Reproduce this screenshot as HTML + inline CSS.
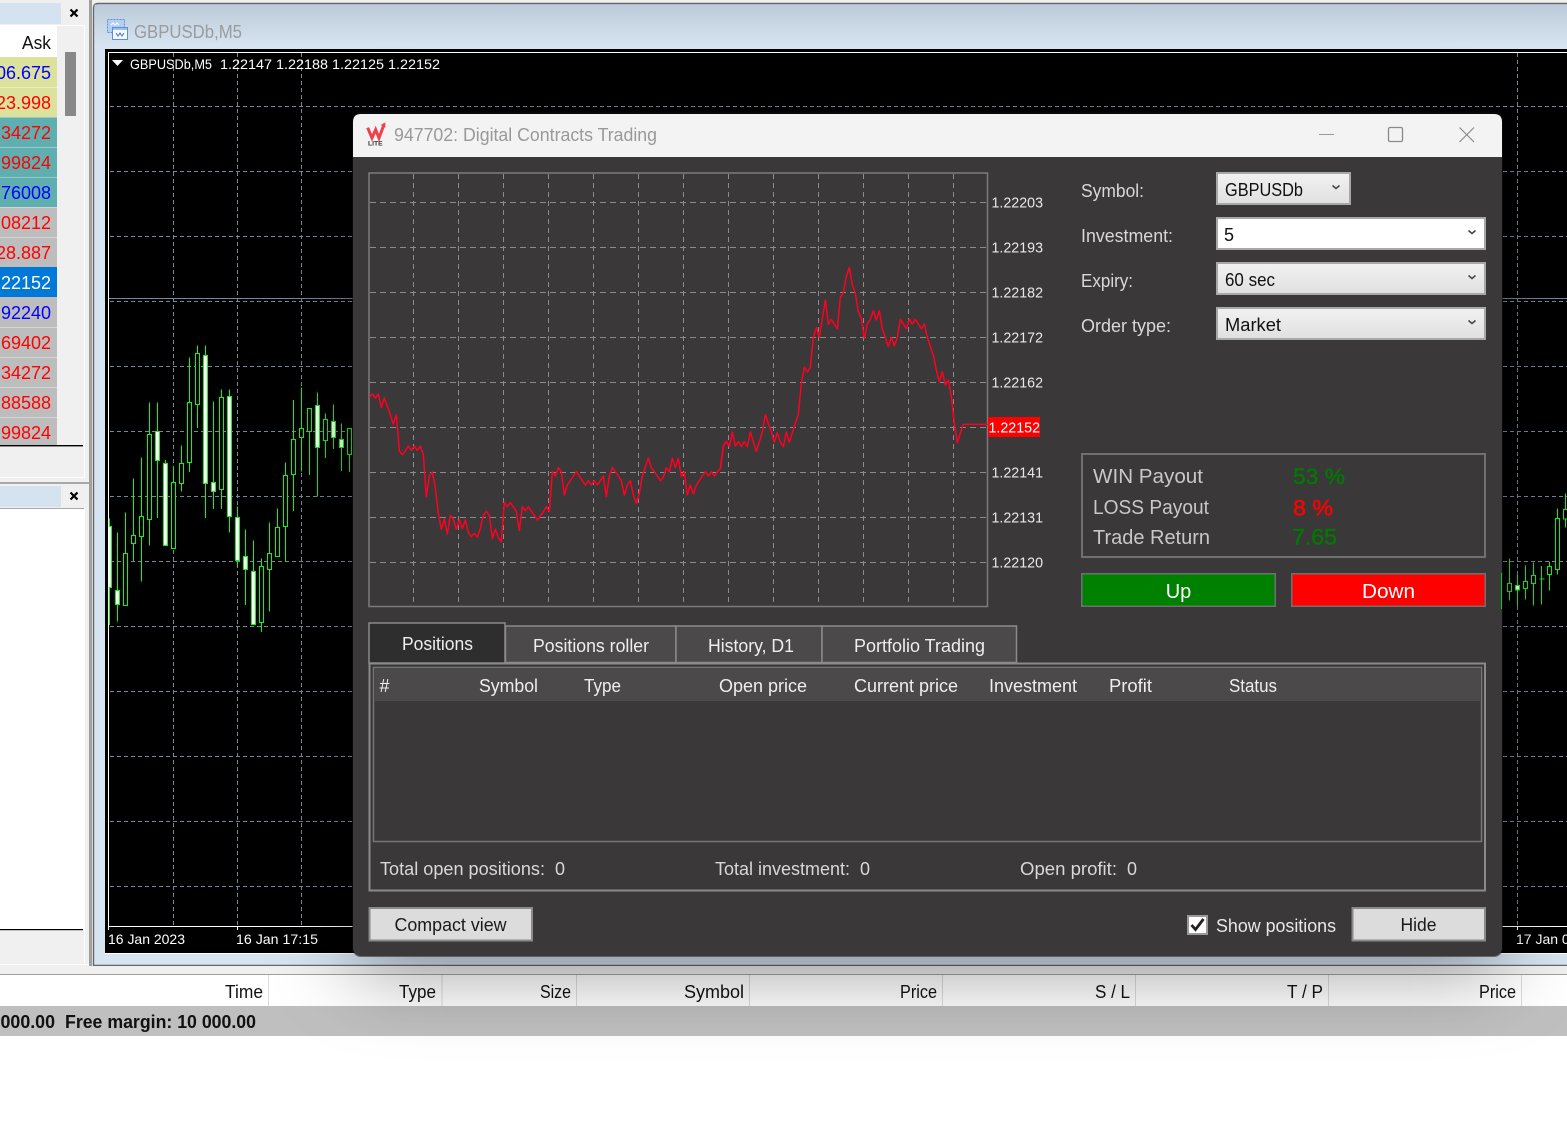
<!DOCTYPE html>
<html><head><meta charset="utf-8"><title>Digital Contracts Trading</title>
<style>
html,body{margin:0;padding:0;background:#fff;width:1567px;height:1147px;overflow:hidden}
svg{display:block;font-family:"Liberation Sans",sans-serif}
</style></head><body>
<svg xmlns="http://www.w3.org/2000/svg" width="1567" height="1147" viewBox="0 0 1567 1147">
<defs>
<linearGradient id="tb" x1="0" y1="0" x2="0" y2="1"><stop offset="0" stop-color="#bccbd9"/><stop offset="1" stop-color="#d8e5f2"/></linearGradient>
<linearGradient id="cb" x1="0" y1="0" x2="0" y2="1"><stop offset="0" stop-color="#f2f2f2"/><stop offset="1" stop-color="#e0e0e0"/></linearGradient>
<filter id="sh" x="-20%" y="-25%" width="140%" height="150%"><feGaussianBlur stdDeviation="40"/></filter>
<clipPath id="chartclip"><rect x="109" y="53" width="1458" height="873"/></clipPath>
</defs>

<!-- left panels -->
<rect x="0" y="0" width="90" height="966" fill="#f0f0f0"/>
<rect x="0" y="3" width="61" height="21" fill="#d5e2ef"/>
<path d="M70.5 9.5l7 7M77.5 9.5l-7 7" stroke="#000" stroke-width="2.2"/>
<rect x="0" y="25" width="84" height="1" fill="#fff"/>
<rect x="0" y="26" width="57" height="31" fill="#fff"/>
<text x="51" y="49" font-size="18" text-anchor="end" fill="#111" textLength="29" lengthAdjust="spacingAndGlyphs">Ask</text>
<rect y="57" width="57" height="60" fill="#dce29c"/>
<rect y="117" width="57" height="90" fill="#5fafb0"/>
<rect y="207" width="57" height="60" fill="#bdbdbd"/>
<rect y="267" width="57" height="30" fill="#0078d7"/>
<rect y="297" width="57" height="148" fill="#bdbdbd"/>
<path d="M0 87.5H57M0 117.5H57M0 147.5H57M0 177.5H57M0 207.5H57M0 237.5H57M0 327.5H57M0 357.5H57M0 387.5H57M0 417.5H57" stroke="#fff" stroke-opacity=".35"/>
<g font-size="18" text-anchor="end" fill="#f00">
<text x="51" y="79" fill="#00f">06.675</text>
<text x="51" y="109">23.998</text>
<text x="51" y="139">34272</text>
<text x="51" y="169">99824</text>
<text x="51" y="199" fill="#00f">76008</text>
<text x="51" y="229">08212</text>
<text x="51" y="259">28.887</text>
<text x="51" y="289" fill="#fff">22152</text>
<text x="51" y="319" fill="#00f">92240</text>
<text x="51" y="349">69402</text>
<text x="51" y="379">34272</text>
<text x="51" y="409">88588</text>
<text x="51" y="439">99824</text>
</g>
<rect x="65" y="52" width="11" height="64" fill="#888"/>
<rect x="0" y="445" width="83" height="1.4" fill="#000"/>
<rect x="0" y="477" width="85" height="1" fill="#fff"/>
<rect x="84" y="25" width="1" height="453" fill="#fff"/>
<rect x="0" y="482" width="90" height="2" fill="#a8a8a8"/>
<rect x="0" y="486" width="61" height="21" fill="#d5e2ef"/>
<path d="M70.5 492.5l7 7M77.5 492.5l-7 7" stroke="#000" stroke-width="2.2"/>
<rect x="0" y="508" width="84" height="1" fill="#a8a8a8"/>
<rect x="0" y="509" width="84" height="420" fill="#fff"/>
<rect x="0" y="929" width="83" height="1.2" fill="#000"/>
<rect x="0" y="964" width="90" height="1" fill="#fff"/>
<rect x="84" y="509" width="1" height="454" fill="#fff"/>
<rect x="89" y="0" width="3" height="966" fill="#a0a0a0"/>

<!-- chart window -->
<rect x="92" y="0" width="1475" height="975" fill="#f0f0f0"/>
<path d="M1567 3.5H98q-4.500 0 -4.500 4.500V965.500H1567" fill="#d6e4f2" stroke="#666" stroke-width="1.4"/>
<rect x="94.500" y="4.500" width="1473" height="44" fill="url(#tb)"/>
<!-- window icon -->
<rect x="107.500" y="19.500" width="17" height="13" fill="#b4cff2" stroke="#5c90dc" stroke-dasharray="2 1"/>
<path d="M111 25l2-2 2 2 2-2 2 2" stroke="#ffffff" fill="none"/>
<rect x="112.500" y="27.500" width="15" height="12" fill="#f6faff" stroke="#5c90dc"/>
<rect x="113" y="28" width="14" height="2" fill="#9cc0ee"/>
<path d="M116 33l2 3 2-3 2 3 2-3" stroke="#3a70c0" fill="none"/>
<text x="134" y="38" font-size="18" fill="#9b9b9b" textLength="108" lengthAdjust="spacingAndGlyphs">GBPUSDb,M5</text>

<rect x="105" y="49" width="1462" height="904" fill="#000"/>
<rect x="105" y="953" width="1462" height="1" fill="#fff"/>
<path d="M108.500 52.500H1567M108.500 52V926.500H1567" stroke="#fff" fill="none"/>
<path d="M237.500 926v4M108.500 926v4M1517.500 926v4" stroke="#fff"/>
<g stroke="#778899" stroke-dasharray="4 3" fill="none" clip-path="url(#chartclip)">
<path d="M110 106.500H1567M110 171.500H1567M110 236.500H1567M110 301.500H1567M110 366.500H1567M110 431.500H1567M110 496.500H1567M110 561.500H1567M110 626.500H1567M110 691.500H1567M110 756.500H1567M110 821.500H1567M110 886.500H1567"/>
<path d="M173.500 53V926M237.500 53V926M301.500 53V926M1517.500 53V926"/>
</g>
<rect x="109" y="298" width="1458" height="1" fill="#778899"/>
<path d="M112 60h11l-5.500 6z" fill="#fff"/>
<g font-size="14" fill="#fff">
<text x="130" y="69" textLength="82" lengthAdjust="spacingAndGlyphs">GBPUSDb,M5</text>
<text x="220" y="69" textLength="220" lengthAdjust="spacingAndGlyphs">1.22147 1.22188 1.22125 1.22152</text>
<text x="108" y="944" textLength="77" lengthAdjust="spacingAndGlyphs">16 Jan 2023</text>
<text x="236" y="944" textLength="82" lengthAdjust="spacingAndGlyphs">16 Jan 17:15</text>
<text x="1516" y="944">17 Jan 02:15</text>
</g>

<!-- candles (left group) -->
<g transform="translate(0,320) scale(.33333)" shape-rendering="crispEdges">
<path stroke="#00ff00" stroke-width="3" fill="none" d="M328.500 595V915M352.500 637V905M376.500 577V857M400.500 475V723M424.500 412V785M448.500 247V677M472.500 247V594M496.500 420V677M520.500 440V686M544.500 376V515M568.500 112V456M592.500 76V324M616.500 76V594M640.500 244V567M664.500 208V567M688.500 208V638M712.500 559V741M736.500 628V855M760.500 661V914M784.500 715V936M808.500 607V875M832.500 565V710M856.500 427V724M880.500 240V573M904.500 203V454M928.500 265V465M952.500 217V530M976.500 280V414M1000.500 253V387M1024.500 310V453M1048.500 325V456"/>
<g fill="#000" stroke="#00ff00" stroke-width="3">
<rect x="370.500" y="700" width="12" height="156"/>
<rect x="394.500" y="647" width="12" height="23"/>
<rect x="418.500" y="590" width="12" height="59"/>
<rect x="442.500" y="343" width="12" height="255"/>
<rect x="514.500" y="487" width="12" height="199"/>
<rect x="538.500" y="431" width="12" height="59"/>
<rect x="562.500" y="247" width="12" height="180"/>
<rect x="586.500" y="100" width="12" height="153"/>
<rect x="658.500" y="232" width="12" height="276"/>
<rect x="778.500" y="739" width="12" height="168"/>
<rect x="802.500" y="700" width="12" height="48"/>
<rect x="826.500" y="622" width="12" height="87"/>
<rect x="850.500" y="466" width="12" height="153"/>
<rect x="874.500" y="358" width="12" height="105"/>
<rect x="898.500" y="326" width="12" height="26"/>
<rect x="922.500" y="265" width="12" height="69"/>
<rect x="970.500" y="298" width="12" height="63"/>
<rect x="1042.500" y="325" width="12" height="78"/>
</g>
<g fill="#fff" stroke="#00ff00" stroke-width="3">
<rect x="322.500" y="620" width="12" height="182"/>
<rect x="346.500" y="812" width="12" height="41"/>
<rect x="466.500" y="335" width="12" height="86"/>
<rect x="490.500" y="431" width="12" height="245"/>
<rect x="610.500" y="106" width="12" height="384"/>
<rect x="634.500" y="488" width="12" height="26"/>
<rect x="682.500" y="230" width="12" height="359"/>
<rect x="706.500" y="593" width="12" height="128"/>
<rect x="730.500" y="710" width="12" height="38"/>
<rect x="754.500" y="755" width="12" height="158"/>
<rect x="946.500" y="257" width="12" height="125"/>
<rect x="994.500" y="305" width="12" height="47"/>
<rect x="1018.500" y="359" width="12" height="23"/>
</g>
</g>
<rect x="105" y="320" width="3" height="320" fill="#000"/>
<rect x="108" y="320" width="1" height="320" fill="#fff"/>
<!-- candles (right group) -->
<g transform="translate(1060,440) scale(.33333)" shape-rendering="crispEdges">
<path stroke="#00ff00" stroke-width="3" fill="none" d="M1348.500 355V482M1372.500 405V498M1396.500 377V478M1420.500 367V496M1444.500 378V494M1468.500 365V452M1492.500 205V404M1516.500 160V263"/>
<g fill="#000" stroke="#00ff00" stroke-width="3">
<rect x="1342.500" y="431" width="12" height="23"/>
<rect x="1390.500" y="425" width="12" height="20"/>
<rect x="1414.500" y="407" width="12" height="23"/>
<rect x="1462.500" y="380" width="12" height="23"/>
<rect x="1486.500" y="236" width="12" height="152"/>
<rect x="1510.500" y="208" width="12" height="29"/>
</g>
<rect x="1366.500" y="437" width="12" height="13" fill="#fff" stroke="#00ff00" stroke-width="3"/>
<rect x="1438" y="415" width="15" height="3" fill="#00ff00"/>
</g>

<!-- bottom table -->
<rect x="0" y="966" width="1567" height="8" fill="#f0f0f0"/>
<rect x="0" y="974" width="1567" height="1" fill="#a0a0a0"/>
<rect x="0" y="975" width="1567" height="31" fill="#fff"/>
<path d="M268.500 975V1006M442 975V1006M576.500 975V1006M749.500 975V1006M942.500 975V1006M1135.500 975V1006M1328.500 975V1006M1521.500 975V1006" stroke="#dcdcdc"/>
<g font-size="18" text-anchor="end" fill="#111">
<text x="263" y="998" textLength="38" lengthAdjust="spacingAndGlyphs">Time</text>
<text x="436" y="998" textLength="37" lengthAdjust="spacingAndGlyphs">Type</text>
<text x="571" y="998" textLength="31" lengthAdjust="spacingAndGlyphs">Size</text>
<text x="744" y="998" textLength="60" lengthAdjust="spacingAndGlyphs">Symbol</text>
<text x="937" y="998" textLength="37" lengthAdjust="spacingAndGlyphs">Price</text>
<text x="1130" y="998" textLength="35" lengthAdjust="spacingAndGlyphs">S / L</text>
<text x="1323" y="998" textLength="36" lengthAdjust="spacingAndGlyphs">T / P</text>
<text x="1516" y="998" textLength="37" lengthAdjust="spacingAndGlyphs">Price</text>
</g>
<rect x="0" y="1006" width="1567" height="30" fill="#bfbfbf"/>
<text x="0.500" y="1028" font-size="18" font-weight="bold" fill="#111" textLength="54.500" lengthAdjust="spacingAndGlyphs">000.00</text>
<text x="65" y="1028" font-size="18" font-weight="bold" fill="#111" textLength="191" lengthAdjust="spacingAndGlyphs">Free margin: 10 000.00</text>

<!-- dialog shadow -->
<rect x="353" y="134" width="1149" height="836" rx="8" fill="#000" fill-opacity=".4" filter="url(#sh)"/>

<!-- dialog -->
<rect x="352" y="112" width="1151" height="845" rx="9" fill="#111" fill-opacity=".5"/>
<rect x="353" y="114" width="1149" height="842" rx="8" fill="#3a3839"/>
<path d="M353 157V122q0-8 8-8H1494q8 0 8 8V157z" fill="#f3f3f3"/>
<g transform="translate(350,105) scale(.33333)">
<path d="M53 68L66 99L77 74L87 99L100 64" fill="none" stroke="#f0404a" stroke-width="9"/>
<path d="M92 60L106 52L106 68z" fill="#f0404a"/>
<text x="54" y="122" font-size="20" font-weight="bold" fill="#333" textLength="44" lengthAdjust="spacingAndGlyphs">LITE</text>
</g>
<text x="394" y="141" font-size="18" fill="#999" textLength="263" lengthAdjust="spacingAndGlyphs">947702: Digital Contracts Trading</text>
<rect x="1319" y="134" width="15" height="1" fill="#999"/>
<rect x="1388.500" y="127.500" width="14" height="14" rx="1.500" fill="none" stroke="#8a8a8a" stroke-width="1.300"/>
<path d="M1459.500 127.500L1474 142M1474 127.500L1459.500 142" stroke="#8a8a8a" stroke-width="1.200" fill="none"/>

<!-- dialog chart -->
<g stroke="#8c8c8c" fill="none">
<path stroke-dasharray="6 4" d="M370 202.500H987M370 247.500H987M370 292.500H987M370 337.500H987M370 382.500H987M370 427.500H987M370 472.500H987M370 517.500H987M370 562.500H987"/>
<path stroke-dasharray="5 4" d="M413.500 174V606M458.500 174V606M503.500 174V606M548.500 174V606M593.500 174V606M638.500 174V606M683.500 174V606M728.500 174V606M773.500 174V606M818.500 174V606M863.500 174V606M908.500 174V606M953.500 174V606"/>
</g>
<rect x="369" y="173" width="618.500" height="433.500" fill="none" stroke="#7c7c7c" stroke-width="1.500"/>
<g transform="translate(360,370) scale(.33333)">
<polyline fill="none" stroke="#ff0022" stroke-width="4.500" stroke-linejoin="round" points="28,82 37,72 46,84 55,72 64,112 73,84 82,108 91,135 100,162 109,135 118,243 127,254 136,243 145,228 154,241 163,228 172,241 181,228 190,254 199,380 208,318 217,306 226,354 235,430 244,478 253,447 262,492 271,436 280,447 289,478 298,450 307,475 316,450 325,487 334,500 343,490 352,502 361,475 370,436 379,424 388,436 397,506 406,478 415,503 424,516 433,397 442,410 451,398 460,410 469,424 478,482 487,410 496,422 505,410 514,424 523,436 532,450 541,438 550,426 559,410 568,425 577,305 586,318 595,293 604,305 613,375 622,345 631,332 640,318 649,305 658,318 667,332 676,345 685,332 694,345 703,332 712,345 721,332 730,318 739,380 748,318 757,293 766,305 775,318 784,332 793,375 802,345 811,332 820,375 829,400 838,370 847,318 856,290 865,265 874,293 883,305 892,318 901,332 910,322 919,293 928,305 937,265 946,293 955,265 964,320 973,306 982,375 991,345 1000,372 1009,345 1018,332 1027,318 1036,305 1045,318 1054,305 1063,318 1072,306 1081,295 1090,228 1099,214 1108,228"/>
</g>
<g transform="translate(720,250) scale(.33333)">
<polyline fill="none" stroke="#ff0022" stroke-width="4.500" stroke-linejoin="round" points="1,658 10,588 19,575 28,590 37,546 46,588 55,575 64,590 73,575 82,590 91,546 100,575 109,604 118,575 127,546 136,494 145,520 154,546 163,577 172,548 181,577 190,590 199,546 208,577 217,548 226,520 235,494 244,400 253,352 262,366 271,352 280,262 289,233 298,262 307,205 316,150 325,223 334,208 343,222 352,237 361,142 370,128 379,80 388,52 397,105 406,130 415,185 424,205 433,265 442,222 451,208 460,182 469,210 478,182 487,237 496,262 505,290 514,262 523,288 532,262 541,208 550,222 559,236 568,208 577,222 586,208 595,222 604,236 613,222 622,262 631,290 640,315 649,360 658,395 667,365 676,405 685,390 694,440 703,520 712,578 721,550 730,523 803,523"/>
</g>
<rect x="988" y="417" width="52" height="20" fill="#f00"/>
<g font-size="15" fill="#e8e8e8">
<text x="991.500" y="207.500" textLength="51.500" lengthAdjust="spacingAndGlyphs">1.22203</text>
<text x="991.500" y="252.500" textLength="51.500" lengthAdjust="spacingAndGlyphs">1.22193</text>
<text x="991.500" y="297.500" textLength="51.500" lengthAdjust="spacingAndGlyphs">1.22182</text>
<text x="991.500" y="342.500" textLength="51.500" lengthAdjust="spacingAndGlyphs">1.22172</text>
<text x="991.500" y="387.500" textLength="51.500" lengthAdjust="spacingAndGlyphs">1.22162</text>
<text x="988.500" y="432.500" textLength="51.500" lengthAdjust="spacingAndGlyphs" fill="#fff">1.22152</text>
<text x="991.500" y="477.500" textLength="51.500" lengthAdjust="spacingAndGlyphs">1.22141</text>
<text x="991.500" y="522.500" textLength="51.500" lengthAdjust="spacingAndGlyphs">1.22131</text>
<text x="991.500" y="567.500" textLength="51.500" lengthAdjust="spacingAndGlyphs">1.22120</text>
</g>

<!-- form -->
<g font-size="18" fill="#d8d8d8">
<text x="1081" y="197" textLength="63" lengthAdjust="spacingAndGlyphs">Symbol:</text>
<text x="1081" y="242" textLength="92" lengthAdjust="spacingAndGlyphs">Investment:</text>
<text x="1081" y="287" textLength="52" lengthAdjust="spacingAndGlyphs">Expiry:</text>
<text x="1081" y="332" textLength="90" lengthAdjust="spacingAndGlyphs">Order type:</text>
</g>
<g stroke="#a8a8a8" stroke-width="2">
<rect x="1217" y="173" width="133" height="31" fill="url(#cb)"/>
<rect x="1217" y="218" width="268" height="31" fill="#fff"/>
<rect x="1217" y="263" width="268" height="31" fill="url(#cb)"/>
<rect x="1217" y="308" width="268" height="31" fill="url(#cb)"/>
</g>
<g font-size="18" fill="#111">
<text x="1225" y="196" textLength="78" lengthAdjust="spacingAndGlyphs">GBPUSDb</text>
<text x="1224" y="241">5</text>
<text x="1225" y="286" textLength="50" lengthAdjust="spacingAndGlyphs">60 sec</text>
<text x="1225" y="331" textLength="56" lengthAdjust="spacingAndGlyphs">Market</text>
</g>
<path d="M1332.500 185.500l3.500 3 3.500-3M1468.500 230.500l3.500 3 3.500-3M1468.500 275.500l3.500 3 3.500-3M1468.500 320.500l3.500 3 3.500-3" fill="none" stroke="#444" stroke-width="1.500"/>

<rect x="1082" y="454" width="403" height="103" fill="none" stroke="#707070" stroke-width="2"/>
<g font-size="20" fill="#c8c8c8">
<text x="1093" y="483" textLength="110" lengthAdjust="spacingAndGlyphs">WIN Payout</text>
<text x="1093" y="514" textLength="116" lengthAdjust="spacingAndGlyphs">LOSS Payout</text>
<text x="1093" y="544" textLength="117" lengthAdjust="spacingAndGlyphs">Trade Return</text>
</g>
<g font-size="22">
<text x="1293" y="484" fill="#007a00" stroke="#007a00" stroke-width=".4" textLength="52" lengthAdjust="spacingAndGlyphs">53 %</text>
<text x="1293" y="515.500" fill="#ff0000" stroke="#ff0000" stroke-width=".5" textLength="40" lengthAdjust="spacingAndGlyphs">8 %</text>
<text x="1292" y="544.500" fill="#007a00" stroke="#007a00" stroke-width=".4" textLength="45" lengthAdjust="spacingAndGlyphs">7.65</text>
</g>
<rect x="1081.750" y="573.750" width="193.500" height="32.500" fill="#008000" stroke="#707070" stroke-width="1.500"/>
<rect x="1291.750" y="573.750" width="193.500" height="32.500" fill="#ff0000" stroke="#707070" stroke-width="1.500"/>
<text x="1178.500" y="598" font-size="20" fill="#fff" text-anchor="middle">Up</text>
<text x="1388.500" y="598" font-size="20" fill="#fff" text-anchor="middle" textLength="53" lengthAdjust="spacingAndGlyphs">Down</text>
<rect x="1501" y="573" width="1" height="36" fill="#18c818"/>

<!-- tabs -->
<rect x="369.500" y="663.500" width="1115.500" height="227" fill="#3a3839" stroke="#8a8a8a" stroke-width="2"/>
<rect x="373.500" y="667.500" width="1108" height="174" fill="#3a3839" stroke="#767676" stroke-width="1.500"/>
<rect x="375" y="669" width="1105" height="32" fill="#4b494a"/>
<g fill="#4b494a" stroke="#8a8a8a" stroke-width="1.500">
<rect x="505.500" y="626" width="170.500" height="36.500"/>
<rect x="676" y="626" width="146" height="36.500"/>
<rect x="822" y="626" width="194.500" height="36.500"/>
</g>
<rect x="369" y="623" width="136" height="40" fill="#2f2e2e" stroke="#8a8a8a" stroke-width="1.500"/>
<g font-size="18" fill="#eee">
<text x="402" y="650" textLength="71" lengthAdjust="spacingAndGlyphs">Positions</text>
<text x="533" y="652" textLength="116" lengthAdjust="spacingAndGlyphs">Positions roller</text>
<text x="708" y="652" textLength="86" lengthAdjust="spacingAndGlyphs">History, D1</text>
<text x="854" y="652" textLength="131" lengthAdjust="spacingAndGlyphs">Portfolio Trading</text>
<text x="379.500" y="692">#</text>
<text x="479" y="692" textLength="59" lengthAdjust="spacingAndGlyphs">Symbol</text>
<text x="584" y="692" textLength="37" lengthAdjust="spacingAndGlyphs">Type</text>
<text x="719" y="692" textLength="88" lengthAdjust="spacingAndGlyphs">Open price</text>
<text x="854" y="692" textLength="104" lengthAdjust="spacingAndGlyphs">Current price</text>
<text x="989" y="692" textLength="88" lengthAdjust="spacingAndGlyphs">Investment</text>
<text x="1109" y="692" textLength="43" lengthAdjust="spacingAndGlyphs">Profit</text>
<text x="1229" y="692" textLength="48" lengthAdjust="spacingAndGlyphs">Status</text>
</g>
<g font-size="18" fill="#d8d8d8">
<text x="380" y="875" textLength="165" lengthAdjust="spacingAndGlyphs">Total open positions:</text>
<text x="555" y="875">0</text>
<text x="715" y="875" textLength="135" lengthAdjust="spacingAndGlyphs">Total investment:</text>
<text x="860" y="875">0</text>
<text x="1020" y="875" textLength="97" lengthAdjust="spacingAndGlyphs">Open profit:</text>
<text x="1127" y="875">0</text>
</g>

<!-- bottom buttons -->
<rect x="369.500" y="908" width="162.500" height="32.500" fill="#dcdcdc" stroke="#8a8a8a" stroke-width="2"/>
<text x="450.500" y="931" font-size="18" fill="#1a1a1a" text-anchor="middle" textLength="112" lengthAdjust="spacingAndGlyphs">Compact view</text>
<rect x="1352.500" y="908" width="132.500" height="32.500" fill="#dcdcdc" stroke="#8a8a8a" stroke-width="2"/>
<text x="1418.500" y="931" font-size="18" fill="#1a1a1a" text-anchor="middle" textLength="36" lengthAdjust="spacingAndGlyphs">Hide</text>
<rect x="1188" y="916" width="19" height="18" fill="#fff" stroke="#9a9a9a" stroke-width="2"/>
<path d="M1191.500 925l4 4.500 8-10.500" fill="none" stroke="#222" stroke-width="2.800"/>
<text x="1216" y="932" font-size="18" fill="#e8e8e8" textLength="120" lengthAdjust="spacingAndGlyphs">Show positions</text>
</svg>
</body></html>
